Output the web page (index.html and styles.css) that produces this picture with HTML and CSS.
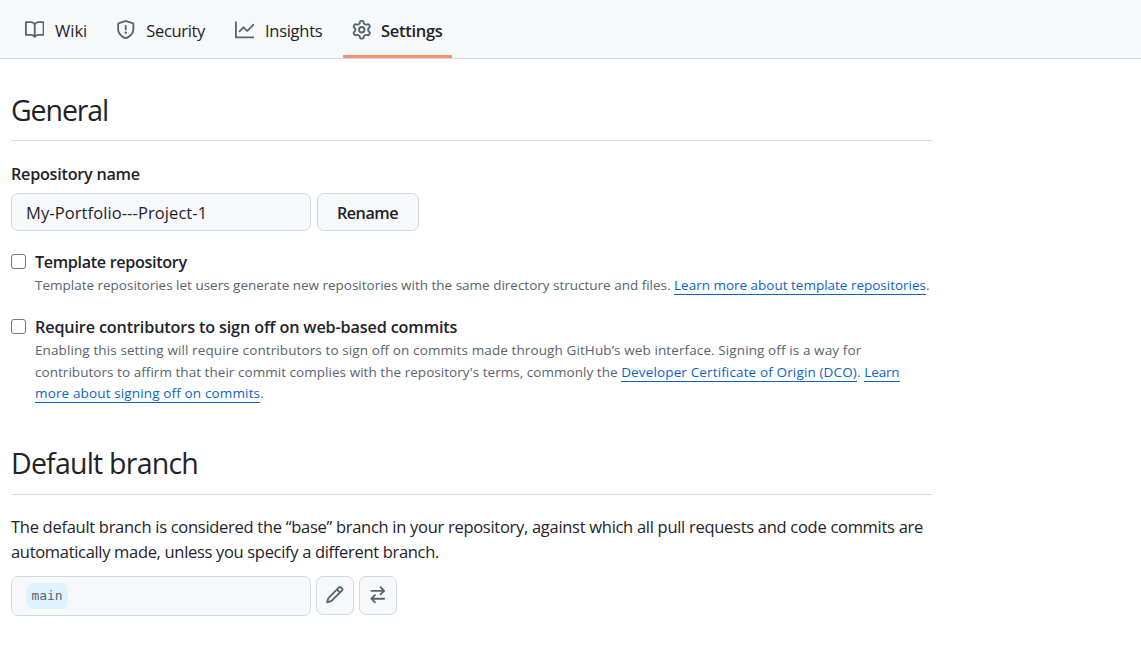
FILE: index.html
```html
<!DOCTYPE html>
<html lang="en">
<head>
<meta charset="utf-8">
<title>Repository settings</title>
<link rel="stylesheet" href="styles.css">
</head>
<body>
<nav class="tabs">
  <a class="tab tab-wiki"><svg class="icon" viewBox="0 0 16 16"><path d="M0 1.75A.75.75 0 0 1 .75 1h4.253c1.227 0 2.317.59 3 1.501A3.743 3.743 0 0 1 11.006 1h4.245a.75.75 0 0 1 .75.75v10.5a.75.75 0 0 1-.75.75h-4.507a2.25 2.25 0 0 0-1.591.659l-.622.621a.75.75 0 0 1-1.06 0l-.622-.621A2.25 2.25 0 0 0 5.258 13H.75a.75.75 0 0 1-.75-.75Zm7.251 10.324.004-5.073-.002-2.253A2.25 2.25 0 0 0 5.003 2.5H1.5v9h3.757a3.75 3.75 0 0 1 1.994.574ZM8.755 4.75l-.004 7.322a3.752 3.752 0 0 1 1.992-.572H14.5v-9h-3.495a2.25 2.25 0 0 0-2.25 2.25Z"/></svg><span>Wiki</span></a>
  <a class="tab tab-security"><svg class="icon" viewBox="0 0 16 16"><path d="M7.467.133a1.748 1.748 0 0 1 1.066 0l5.25 1.68A1.75 1.75 0 0 1 15 3.48V7c0 1.566-.32 3.182-1.303 4.682-.983 1.498-2.585 2.813-5.032 3.855a1.697 1.697 0 0 1-1.33 0c-2.447-1.042-4.049-2.357-5.032-3.855C1.32 10.182 1 8.566 1 7V3.48a1.75 1.75 0 0 1 1.217-1.667Zm.61 1.429a.25.25 0 0 0-.153 0l-5.25 1.68a.25.25 0 0 0-.174.238V7c0 1.358.275 2.666 1.057 3.86.784 1.194 2.121 2.34 4.366 3.297a.196.196 0 0 0 .154 0c2.245-.956 3.582-2.104 4.366-3.298C13.225 9.666 13.5 8.36 13.5 7V3.48a.251.251 0 0 0-.174-.237l-5.25-1.68ZM8.75 4.75v3a.75.75 0 0 1-1.5 0v-3a.75.75 0 0 1 1.5 0ZM9 10.5a1 1 0 1 1-2 0 1 1 0 0 1 2 0Z"/></svg><span>Security</span></a>
  <a class="tab tab-insights"><svg class="icon" viewBox="0 0 16 16"><path d="M1.5 1.75V13.5h13.75a.75.75 0 0 1 0 1.5H.75a.75.75 0 0 1-.75-.75V1.75a.75.75 0 0 1 1.5 0Zm14.28 2.53-5.25 5.25a.75.75 0 0 1-1.06 0L7 7.06 4.28 9.78a.751.751 0 0 1-1.042-.018.751.751 0 0 1-.018-1.042l3.25-3.25a.75.75 0 0 1 1.06 0L10 7.94l4.72-4.72a.751.751 0 0 1 1.042.018.751.751 0 0 1 .018 1.042Z"/></svg><span>Insights</span></a>
  <a class="tab tab-settings"><svg class="icon" viewBox="0 0 16 16"><path d="M8 0a8.2 8.2 0 0 1 .701.031C9.444.095 9.99.645 10.16 1.29l.288 1.107c.018.066.079.158.212.224.231.114.454.243.668.386.123.082.233.09.299.071l1.103-.303c.644-.176 1.392.021 1.82.63.27.385.506.792.704 1.218.315.675.111 1.422-.364 1.891l-.814.806c-.049.048-.098.147-.088.294.016.257.016.515 0 .772-.01.147.038.246.088.294l.814.806c.475.469.679 1.216.364 1.891a7.977 7.977 0 0 1-.704 1.217c-.428.61-1.176.807-1.82.63l-1.102-.302c-.067-.019-.177-.011-.3.071a5.909 5.909 0 0 1-.668.386c-.133.066-.194.158-.211.224l-.29 1.106c-.168.646-.715 1.196-1.458 1.26a8.006 8.006 0 0 1-1.402 0c-.743-.064-1.289-.614-1.458-1.26l-.289-1.106c-.018-.066-.079-.158-.212-.224a5.738 5.738 0 0 1-.668-.386c-.123-.082-.233-.09-.299-.071l-1.103.303c-.644.176-1.392-.021-1.82-.63a8.12 8.12 0 0 1-.704-1.218c-.315-.675-.111-1.422.363-1.891l.815-.806c.05-.048.098-.147.088-.294a6.214 6.214 0 0 1 0-.772c.01-.147-.038-.246-.088-.294l-.815-.806C.635 6.045.431 5.298.746 4.623a7.92 7.92 0 0 1 .704-1.217c.428-.61 1.176-.807 1.82-.63l1.102.302c.067.019.177.011.3-.071.214-.143.437-.272.668-.386.133-.066.194-.158.211-.224l.29-1.106C6.009.645 6.556.095 7.299.03 7.53.01 7.764 0 8 0Zm-.571 1.525c-.036.003-.108.036-.137.146l-.289 1.105c-.147.561-.549.967-.998 1.189-.173.086-.34.183-.5.29-.417.278-.97.423-1.529.27l-1.103-.303c-.109-.03-.175.016-.195.045-.22.312-.412.644-.573.99-.014.031-.021.11.059.19l.815.806c.411.406.562.957.53 1.456a4.709 4.709 0 0 0 0 .582c.032.499-.119 1.05-.53 1.456l-.815.806c-.081.08-.073.159-.059.19.162.346.353.677.573.989.02.03.085.076.195.046l1.102-.303c.56-.153 1.113-.008 1.53.27.161.107.328.204.501.29.447.222.85.629.997 1.189l.289 1.105c.029.109.101.143.137.146a6.6 6.6 0 0 0 1.142 0c.036-.003.108-.036.137-.146l.289-1.105c.147-.561.549-.967.998-1.189.173-.086.34-.183.5-.29.417-.278.97-.423 1.529-.27l1.103.303c.109.029.175-.016.195-.045.22-.313.411-.644.573-.99.014-.031.021-.11-.059-.19l-.815-.806c-.411-.406-.562-.957-.53-1.456a4.709 4.709 0 0 0 0-.582c-.032-.499.119-1.05.53-1.456l.815-.806c.081-.08.073-.159.059-.19a6.464 6.464 0 0 0-.573-.989c-.02-.03-.085-.076-.195-.046l-1.102.303c-.56.153-1.113.008-1.53-.27a4.44 4.44 0 0 0-.501-.29c-.447-.222-.85-.629-.997-1.189l-.289-1.105c-.029-.11-.101-.143-.137-.146a6.6 6.6 0 0 0-1.142 0ZM11 8a3 3 0 1 1-6 0 3 3 0 0 1 6 0ZM9.5 8a1.5 1.5 0 1 0-3.001.001A1.5 1.5 0 0 0 9.5 8Z"/></svg><span>Settings</span></a>
</nav>
<main class="content">
  <h2 class="heading heading-general">General</h2>
  <label class="field-label" for="repo-name">Repository name</label>
  <div class="rename-row">
    <input class="name-input" id="repo-name" type="text" value="My-Portfolio---Project-1">
    <button class="rename-button" type="button">Rename</button>
  </div>
  <div class="option">
    <input class="checkbox" id="template" type="checkbox">
    <div class="option-body">
      <label class="option-title title-template" for="template">Template repository</label>
      <p class="note">Template repositories let users generate new repositories with the same directory structure and files. <a class="link">Learn more about template repositories</a>.</p>
    </div>
  </div>
  <div class="option">
    <input class="checkbox" id="signoff" type="checkbox">
    <div class="option-body">
      <label class="option-title title-signoff" for="signoff">Require contributors to sign off on web-based commits</label>
      <p class="note"><span class="note-first">Enabling this setting will require contributors to sign off on commits made through GitHub’s web interface. Signing off is a way for</span><br><span class="note-second">contributors to affirm that their commit complies with the repository's terms, commonly the</span> <span class="note-links"><a class="link">Developer Certificate of Origin (DCO)</a>. <a class="link"><span class="link-start">Learn</span><br>more about signing off on commits</a>.</span></p>
    </div>
  </div>
  <h2 class="heading heading-branch">Default branch</h2>
  <p class="branch-text">The default branch is considered the “base” branch in your repository, against which all pull requests and code commits are<br><span class="branch-text-end">automatically made, unless you specify a different branch.</span></p>
  <div class="branch-row">
    <div class="branch-box"><span class="branch-name">main</span></div>
    <button class="icon-button" type="button" aria-label="Rename branch"><svg class="icon" viewBox="0 0 16 16"><path d="M11.013 1.427a1.75 1.75 0 0 1 2.474 0l1.086 1.086a1.75 1.75 0 0 1 0 2.474l-8.61 8.61c-.21.21-.47.364-.756.445l-3.251.93a.75.75 0 0 1-.927-.928l.929-3.25c.081-.286.235-.547.445-.758l8.61-8.61Zm.176 4.823L9.75 4.81l-6.286 6.287a.253.253 0 0 0-.064.108l-.558 1.953 1.953-.558a.253.253 0 0 0 .108-.064Zm1.238-3.763a.25.25 0 0 0-.354 0L10.811 3.75l1.439 1.44 1.263-1.263a.25.25 0 0 0 0-.354Z"/></svg></button>
    <button class="icon-button" type="button" aria-label="Switch branch"><svg class="icon" viewBox="0 0 16 16"><path d="M5.22 14.78a.75.75 0 0 0 1.06-1.06L4.56 12h8.69a.75.75 0 0 0 0-1.5H4.56l1.72-1.72a.75.75 0 0 0-1.06-1.06l-3 3a.75.75 0 0 0 0 1.06l3 3Zm5.56-6.5a.75.75 0 1 1-1.06-1.06l1.72-1.72H2.75a.75.75 0 0 1 0-1.5h8.69L9.72 2.28a.75.75 0 0 1 1.06-1.06l3 3a.75.75 0 0 1 0 1.06l-3 3Z"/></svg></button>
  </div>
</main>
</body>
</html>
```
FILE: styles.css
```css
* { box-sizing: border-box; }
body {
  margin: 0;
  background: #fff;
  color: #1f2328;
  font-family: "Open Sans", "Noto Sans", sans-serif;
  font-size: 16.5px;
}
.icon { width: 19.5px; height: 19.5px; flex: none; fill: #59636e; }

/* Tab bar */
.tabs {
  display: flex;
  height: 59px;
  padding-left: 15px;
  background: #f6f8fa;
  border-bottom: 1px solid #d1d9e0;
}
.tab { display: flex; height: 58px; padding: 0 9.7px; white-space: nowrap; }
.tab .icon { margin-top: 20px; }
.tab span { margin-left: 10.8px; line-height: 62px; }
.tab-wiki { width: 91px; }
.tab-security { width: 119px; letter-spacing: -.33px; }
.tab-security span { margin-left: 11.1px; }
.tab-insights { width: 118px; letter-spacing: -.28px; }
.tab-settings { width: 109px; padding-left: 8.7px; font-weight: 600; letter-spacing: -.3px; border-bottom: 3px solid #fd8c73; border-radius: 1px; }
.tab-settings span { margin-left: 9.8px; }

/* Page body */
.content { width: 932px; padding: 28px 0 0 11px; }
.heading {
  height: 54px;
  margin: 0;
  border-bottom: 1px solid #d8dee4;
  font-size: 28.5px;
  font-weight: 400;
  line-height: 46px;
}
.heading-general { letter-spacing: -1.1px; }
.heading-branch { margin-top: 36.5px; line-height: 44px; letter-spacing: -.78px; }
.field-label {
  display: block;
  margin: 20px 0 6px;
  font-size: 16.2px;
  font-weight: 600;
  line-height: 26px;
  letter-spacing: -.25px;
}
.rename-row { display: flex; gap: 6px; }
.name-input, .rename-button, .branch-box, .icon-button {
  border: 1px solid #d1d9e0;
  border-radius: 7px;
  background: #f6f8fa;
  color: inherit;
}
.name-input { width: 300px; height: 38px; padding: 0 14px; font: inherit; letter-spacing: .09px; }
.rename-button { width: 102px; height: 38px; padding: 2px 1px 0 0; font: inherit; font-size: 16.2px; font-weight: 600; letter-spacing: -.5px; }

/* Checkbox settings */
.option { display: flex; gap: 9px; margin-top: 19px; }
.option + .option { margin-top: 18.5px; }
.checkbox {
  width: 15px;
  height: 15px;
  margin: 4px 0 0;
  flex: none;
  appearance: none;
  border: 1px solid #767676;
  border-radius: 3px;
  background: #fff;
}
.option-body { white-space: nowrap; }
.option-title { display: block; font-size: 16.2px; font-weight: 600; line-height: 24px; }
.title-template { letter-spacing: -.35px; }
.title-signoff { letter-spacing: -.14px; }
.note { margin: 1px 0 0; color: #59636e; font-size: 13.5px; line-height: 21.5px; letter-spacing: -.008px; }
.note-first { letter-spacing: .105px; }
.note-second { letter-spacing: .043px; }
.note-links { letter-spacing: .14px; }
.link-start { letter-spacing: -.15px; }
.link { color: #0a63c9; border-bottom: 1px solid #0a63c9; }

/* Default branch */
.branch-text { margin: 19px 0 12px; line-height: 25px; letter-spacing: -.286px; white-space: nowrap; }
.branch-text-end { letter-spacing: -.318px; }
.branch-row { display: flex; gap: 5px; }
.branch-box { display: flex; width: 300px; height: 40px; padding: 6px 14px; }
.branch-name {
  height: 26px;
  padding: 0 5.4px;
  border-radius: 7px;
  background: #ddf4ff;
  color: #59636e;
  font: 13px/25px "DejaVu Sans Mono", monospace;
}
.icon-button { display: flex; align-items: center; justify-content: center; width: 38px; height: 39px; padding: 0 1px 1px 0; }
```
